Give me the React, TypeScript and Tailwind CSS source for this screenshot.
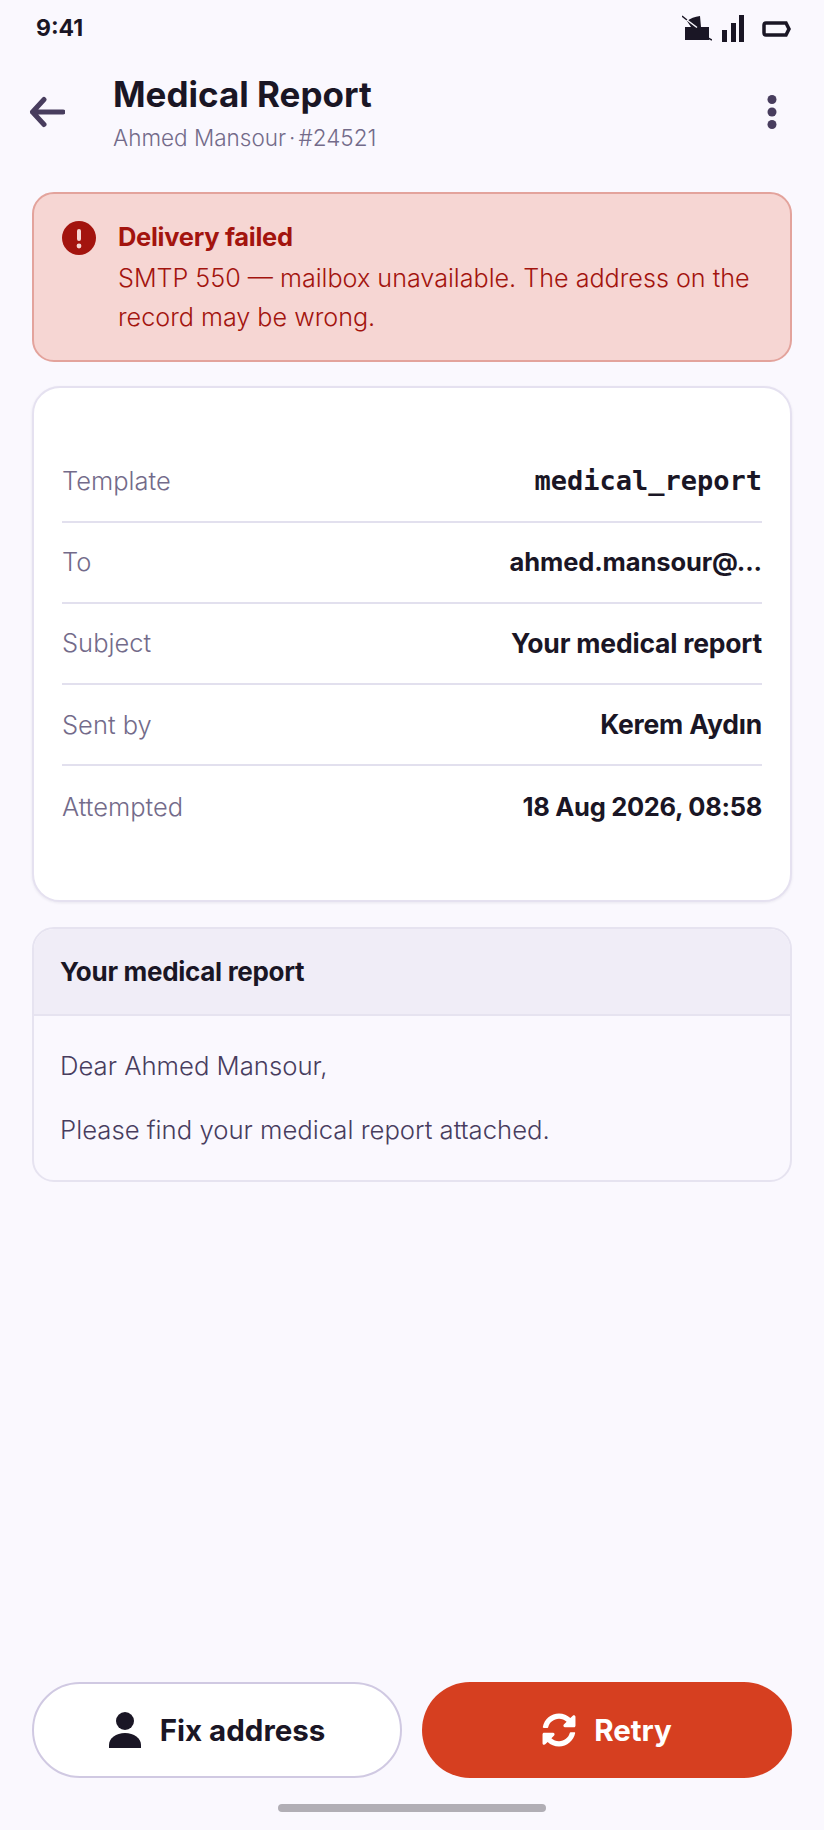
import { FaSyncAlt } from "react-icons/fa"

const rows = [
  { label: "Template", value: "medical_report", valueClass: "font-['DejaVu_Sans_Mono',monospace] text-[27px]" },
  { label: "To", value: "ahmed.mansour@...", valueClass: "text-[25.5px] tracking-[-0.1px]" },
  { label: "Subject", value: "Your medical report", valueClass: "text-[26.5px] tracking-[-0.2px]" },
  { label: "Sent by", value: "Kerem Aydın", valueClass: "text-[26.5px] tracking-[-0.2px]" },
  { label: "Attempted", value: "18 Aug 2026, 08:58", valueClass: "text-[25.5px] tracking-[-0.3px]" },
]

function StatusBar() {
  return (
    <div className="flex h-[56px] items-center justify-between pl-[36px] pr-[33px] pt-[1px]">
      <span className="text-[23px] font-bold leading-none text-[#1a1625]">9:41</span>
      <div className="flex items-center">
        <svg width="30" height="28" viewBox="0 0 30 28" fill="#1a1625">
          <path d="M5 6 Q10 2 18 1 L19 12 L27 12 L27 25 L3 25 L3 12 L9 12 Z" />
          <path d="M0 1 L5 5" stroke="#1a1625" strokeWidth="1.500" fill="none" />
          <path d="M5 5 L15 12.500" stroke="#faf8fe" strokeWidth="1.500" fill="none" />
          <path d="M26 23 L30 25" stroke="#1a1625" strokeWidth="1.500" fill="none" />
        </svg>
        <svg className="ml-[10px]" width="22" height="28" viewBox="0 0 22 28" fill="#1a1625">
          <rect x="0" y="15" width="5" height="12" />
          <rect x="9" y="8" width="5" height="19" />
          <rect x="17" y="0" width="5" height="27" />
        </svg>
        <svg className="ml-[18px]" width="29" height="16" viewBox="0 0 29 16" fill="none">
          <path d="M4 2 H24 L27 8 L24 14 H4 Q2 14 2 12 V4 Q2 2 4 2 Z" stroke="#1a1625" strokeWidth="3.500" />
        </svg>
      </div>
    </div>
  )
}

function Header() {
  return (
    <div className="flex items-start pl-[29px] pr-[47px] pt-[18px]">
      <svg className="mt-[22px]" width="36" height="32" viewBox="0 0 36 32" fill="none" stroke="#483d5e" strokeWidth="5" strokeLinecap="round" strokeLinejoin="round">
        <path d="M34 16 H3.500 M15 3.500 L3.500 16 L15 28.500" />
      </svg>
      <div className="ml-[48px] flex-1">
        <div className="text-[35px] font-bold leading-[40px] text-[#1a1625]">Medical Report</div>
        <div className="mt-[10px] text-[22.5px] font-[350] leading-[28px] text-[#736b8a]">
          Ahmed Mansour<span className="mx-[3px]">·</span>#24521
        </div>
      </div>
      <svg className="mt-[21px]" width="10" height="34" viewBox="0 0 10 34" fill="#483d5e">
        <circle cx="5" cy="4.500" r="4.500" />
        <circle cx="5" cy="17" r="4.500" />
        <circle cx="5" cy="29.500" r="4.500" />
      </svg>
    </div>
  )
}

export default function App() {
  return (
    <div className="flex min-h-[1830px] flex-col bg-[#faf8fe] font-['Inter',sans-serif]">
      <StatusBar />
      <Header />

      <div className="flex flex-col px-[32px] pt-[40px]">
        <div className="flex rounded-[22px] border-2 border-[#e3a39c] bg-[#f6d6d3] pb-[23px] pl-[28px] pr-[24px] pt-[28px] text-[#a3140e]">
          <svg className="mt-[-1px] shrink-0" width="34" height="34" viewBox="0 0 34 34">
            <circle cx="17" cy="17" r="17" fill="#a3140e" />
            <rect x="15" y="8" width="4" height="12" rx="2" fill="#f6d6d3" />
            <circle cx="17" cy="25" r="2.400" fill="#f6d6d3" />
          </svg>
          <div className="ml-[22px]">
            <div className="text-[25.5px] font-bold leading-[30px] tracking-[-0.3px]">Delivery failed</div>
            <div className="mt-[7px] text-[25.15px] font-[350] leading-[39px]">
              SMTP 550 — mailbox unavailable. The address on the record may be wrong.
            </div>
          </div>
        </div>

        <div className="mt-[24px] rounded-[28px] border-2 border-[#e5e1f0] bg-white px-[28px] pb-[53px] pt-[53.5px] shadow-[0_1px_3px_rgba(30,20,60,0.08)]">
          {rows.map((row, i) => (
            <div
              key={row.label}
              className={
                "flex h-[81.2px] items-center justify-between " +
                (i < rows.length - 1 ? "border-b-2 border-[#e2e0ee]" : "")
              }
            >
              <span className="text-[25.5px] font-[350] text-[#736b8a]">{row.label}</span>
              <span className={"font-bold text-[#1a1625] " + row.valueClass}>{row.value}</span>
            </div>
          ))}
        </div>

        <div className="mt-[25px] overflow-hidden rounded-[22px] border-2 border-[#e6e3f0]">
          <div className="flex h-[87px] items-center border-b-2 border-[#e6e3f0] bg-[#f0edf7] px-[26px] text-[26px] font-bold tracking-[-0.3px] text-[#1a1625]">
            Your medical report
          </div>
          <div className="px-[26px] py-[33px] text-[25.7px] font-[350] leading-[34px] text-[#483d5e]">
            <p>Dear Ahmed Mansour,</p>
            <p className="mt-[30px]">Please find your medical report attached.</p>
          </div>
        </div>
      </div>

      <div className="mt-auto grid grid-cols-2 gap-[20px] px-[32px]">
        <button className="flex h-[96px] items-center justify-center gap-[19px] rounded-full border-2 border-[#d0c9e2] bg-white text-[29.5px] font-bold text-[#1a1625]">
          <svg width="32" height="36" viewBox="0 0 32 36" fill="#1a1625">
            <circle cx="16" cy="9" r="9" />
            <path d="M0 36 V33 C0 26 7 21 16 21 C25 21 32 26 32 33 V36 Z" />
          </svg>
          Fix address
        </button>
        <button className="flex h-[96px] items-center justify-center gap-[18px] rounded-full bg-[#d63f20] text-[29.5px] font-bold text-white">
          <FaSyncAlt className="h-[34px] w-[34px]" />
          Retry
        </button>
      </div>

      <div className="flex justify-center pb-[18px] pt-[26px]">
        <div className="h-[8px] w-[268px] rounded-full bg-[#b1aeb5]" />
      </div>
    </div>
  )
}
